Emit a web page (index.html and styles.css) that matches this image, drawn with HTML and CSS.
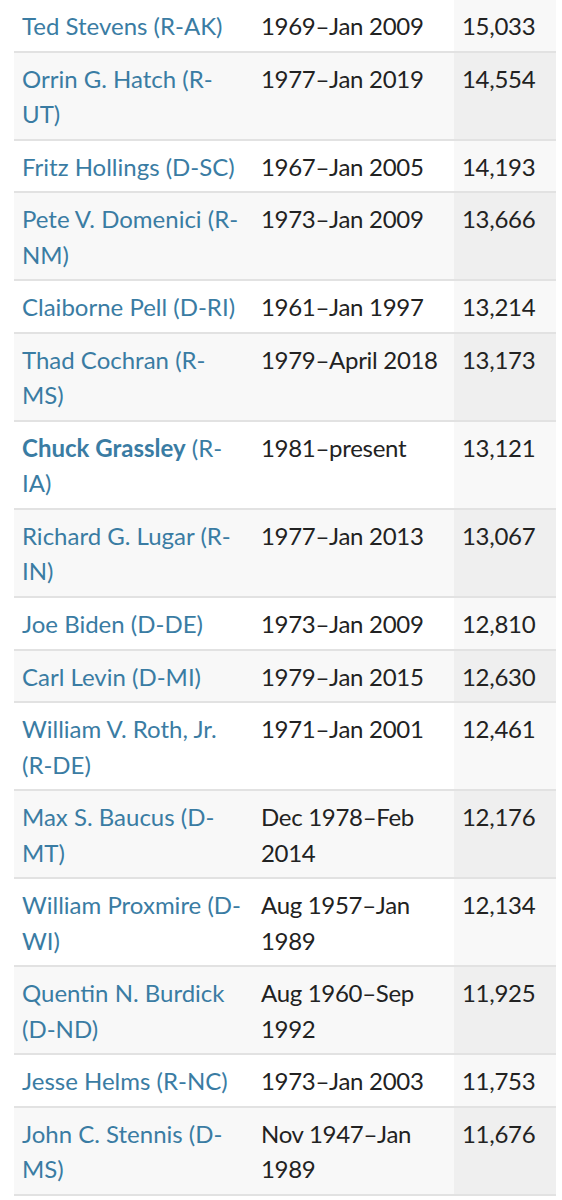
FILE: index.html
```html
<!DOCTYPE html>
<html lang="en">
<head>
<meta charset="utf-8">
<title>Longest-serving senators</title>
<link rel="stylesheet" href="styles.css">
</head>
<body>
<table class="senators">
<colgroup>
<col class="c-name">
<col class="c-term">
<col class="c-days">
</colgroup>
<tbody>
<tr><td><a href="#">Ted Stevens (R-AK)</a></td><td class="term">1969–Jan 2009</td><td class="sorted">15,033</td></tr>
<tr><td><a href="#">Orrin G. Hatch (R-UT)</a></td><td class="term">1977–Jan 2019</td><td class="sorted">14,554</td></tr>
<tr><td><a href="#">Fritz Hollings (D-SC)</a></td><td class="term">1967–Jan 2005</td><td class="sorted">14,193</td></tr>
<tr><td><a href="#">Pete V. Domenici (R-NM)</a></td><td class="term">1973–Jan 2009</td><td class="sorted">13,666</td></tr>
<tr><td><a href="#">Claiborne Pell (D-RI)</a></td><td class="term">1961–Jan 1997</td><td class="sorted">13,214</td></tr>
<tr><td><a href="#">Thad Cochran (R-MS)</a></td><td class="term">1979–April 2018</td><td class="sorted">13,173</td></tr>
<tr><td><a href="#"><b>Chuck Grassley</b> (R-IA)</a></td><td class="term">1981–present</td><td class="sorted">13,121</td></tr>
<tr><td><a href="#">Richard G. Lugar (R-IN)</a></td><td class="term">1977–Jan 2013</td><td class="sorted">13,067</td></tr>
<tr><td><a href="#">Joe Biden (D-DE)</a></td><td class="term">1973–Jan 2009</td><td class="sorted">12,810</td></tr>
<tr><td><a href="#">Carl Levin (D-MI)</a></td><td class="term">1979–Jan 2015</td><td class="sorted">12,630</td></tr>
<tr><td><a href="#">William V. Roth, Jr. (R-DE)</a></td><td class="term">1971–Jan 2001</td><td class="sorted">12,461</td></tr>
<tr><td><a href="#">Max S. Baucus (D-MT)</a></td><td class="term">Dec 1978–Feb 2014</td><td class="sorted">12,176</td></tr>
<tr><td><a href="#">William Proxmire (D-WI)</a></td><td class="term">Aug 1957–Jan 1989</td><td class="sorted">12,134</td></tr>
<tr><td><a href="#">Quentin N. Burdick (D-ND)</a></td><td class="term">Aug 1960–Sep 1992</td><td class="sorted">11,925</td></tr>
<tr><td><a href="#">Jesse Helms (R-NC)</a></td><td class="term">1973–Jan 2003</td><td class="sorted">11,753</td></tr>
<tr><td><a href="#">John C. Stennis (D-MS)</a></td><td class="term">Nov 1947–Jan 1989</td><td class="sorted">11,676</td></tr>
</tbody>
</table>
</body>
</html>
```

FILE: styles.css
```css
html, body {
  margin: 0;
  padding: 0;
  background: #ffffff;
}

body {
  font-family: Lato, "Open Sans", "Liberation Sans", sans-serif;
  font-size: 24px;
  color: #222222;
}

.senators {
  margin-left: 14px;
  width: 542px;
  border-collapse: collapse;
  table-layout: fixed;
}

.c-name { width: 239px; }
.c-term { width: 201px; }
.c-days { width: 102px; }

.senators td {
  padding: 8px 8px 7.4px 8px;
  line-height: 35.3px;
  vertical-align: top;
  border-bottom: 2px solid #e2e2e2;
  text-align: left;
}

.senators td.term,
.senators td.sorted {
  letter-spacing: -0.3px;
}

.senators tr:nth-child(even) td {
  background: #f8f8f8;
}

.senators td.sorted {
  background: #f8f8f8;
}

.senators tr:nth-child(even) td.sorted {
  background: #efefef;
}

.senators a {
  color: #3a7ca3;
  text-decoration: none;
}

.senators b {
  font-weight: 700;
}
```
